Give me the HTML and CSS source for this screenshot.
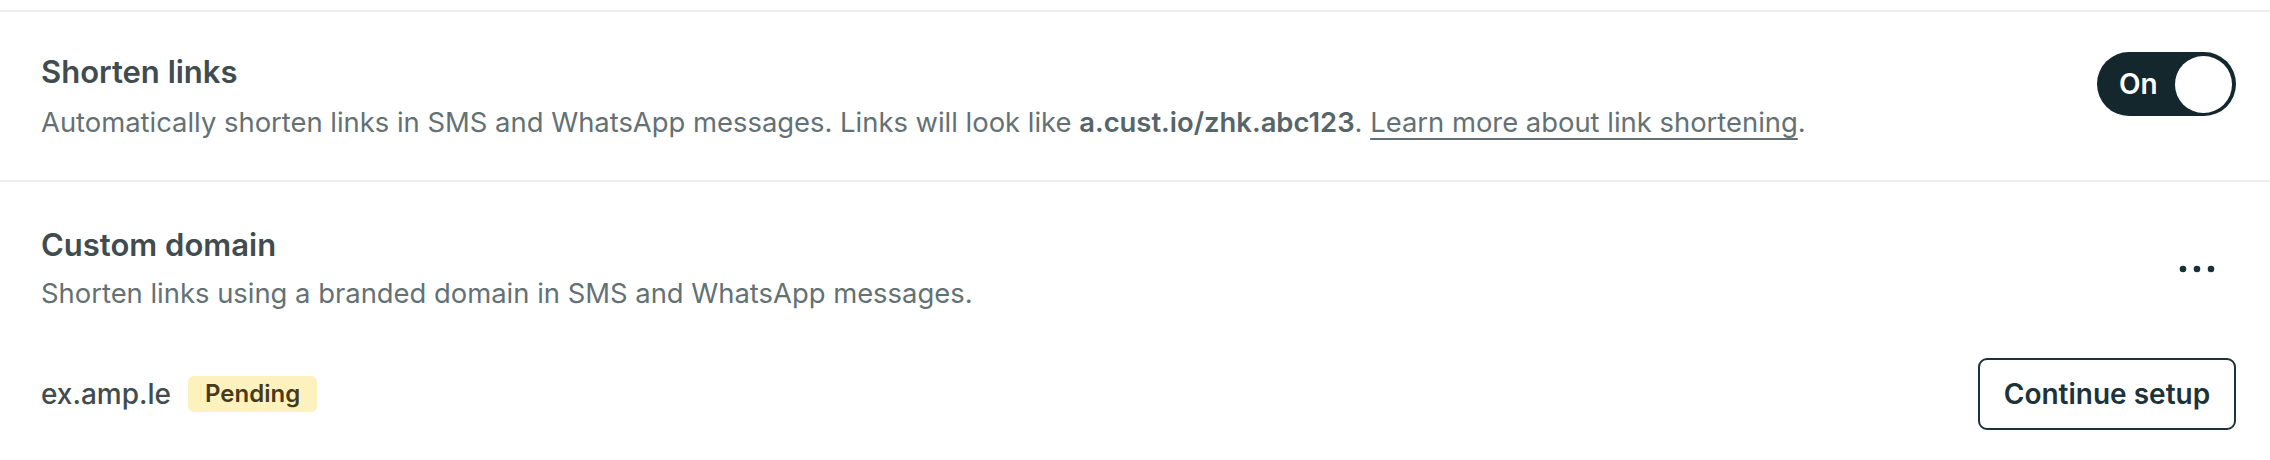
FILE: index.html
```html
<!DOCTYPE html>
<html lang="en">
<head>
<meta charset="utf-8">
<title>Link settings</title>
<link rel="stylesheet" href="styles.css">
</head>
<body>
<div class="page">
  <section class="row row-first">
    <div class="text">
      <h2 class="title">Shorten links</h2>
      <p class="desc">Automatically shorten links in SMS and WhatsApp messages. Links will look like <strong>a.cust.io/zhk.abc123</strong>. <a class="link" href="#">Learn more about link shortening</a>.</p>
    </div>
    <button class="toggle" type="button"><span class="toggle-label">On</span><span class="knob"></span></button>
  </section>
  <section class="row row-domain">
    <div class="head">
      <div class="text">
        <h2 class="title">Custom domain</h2>
        <p class="desc">Shorten links using a branded domain in SMS and WhatsApp messages.</p>
      </div>
      <button class="more" type="button" aria-label="More">
        <svg width="36" height="8" viewBox="0 0 36 8"><circle cx="4" cy="4" r="3.3" fill="#183038"/><circle cx="18" cy="4" r="3.3" fill="#183038"/><circle cx="32" cy="4" r="3.3" fill="#183038"/></svg>
      </button>
    </div>
    <div class="domain">
      <div class="domain-info">
        <span class="domain-name">ex.amp.le</span>
        <span class="badge">Pending</span>
      </div>
      <button class="btn" type="button">Continue setup</button>
    </div>
  </section>
</div>
</body>
</html>
```
FILE: styles.css
```css
* { box-sizing: border-box; }
html, body { margin: 0; padding: 0; background: #fff; }
body { font-family: Inter, "Noto Sans", "Liberation Sans", sans-serif; }
.page { padding-top: 10px; }
.row { border-top: 2px solid #eef0f0; padding: 40px 34px 38px 41px; }
.row-first { display: flex; align-items: flex-start; justify-content: space-between; }
.title { margin: 0; font-size: 31px; line-height: 40px; font-weight: 600; color: #404c50; }
.desc { margin: 10px 0 0; font-size: 27.4px; line-height: 40px; font-weight: 400; color: #637175; }
.desc strong { font-weight: 600; color: #56656a; }
.link { color: #637175; text-decoration: underline; text-underline-offset: 6px; text-decoration-thickness: 2px; }
.toggle { width: 139px; height: 64px; border: none; border-radius: 32px; background: #13272d; padding: 0 4px 0 22px; display: flex; align-items: center; justify-content: space-between; cursor: pointer; }
.toggle-label { font-family: Inter, sans-serif; font-size: 28px; font-weight: 600; color: #fff; }
.knob { width: 57px; height: 57px; border-radius: 50%; background: #fff; }
.row-domain { padding-top: 43px; padding-bottom: 30px; }
.head { display: flex; align-items: center; justify-content: space-between; }
.head .desc { margin-top: 8px; }
.more { background: none; border: none; padding: 0; margin-right: 21px; display: flex; cursor: pointer; }
.domain { display: flex; align-items: center; justify-content: space-between; margin-top: 45px; }
.domain-info { display: flex; align-items: center; gap: 17px; }
.domain-name { font-size: 28px; font-weight: 500; color: #404c50; }
.badge { background: #fdf2bd; color: #473a1b; font-size: 24px; font-weight: 600; border-radius: 6px; padding: 0 17px; height: 36px; line-height: 36px; }
.btn { width: 258px; height: 72px; border: 2px solid #1c333a; border-radius: 9px; background: #fff; color: #1c333a; font-family: Inter, sans-serif; font-size: 28px; font-weight: 600; cursor: pointer; }
```
